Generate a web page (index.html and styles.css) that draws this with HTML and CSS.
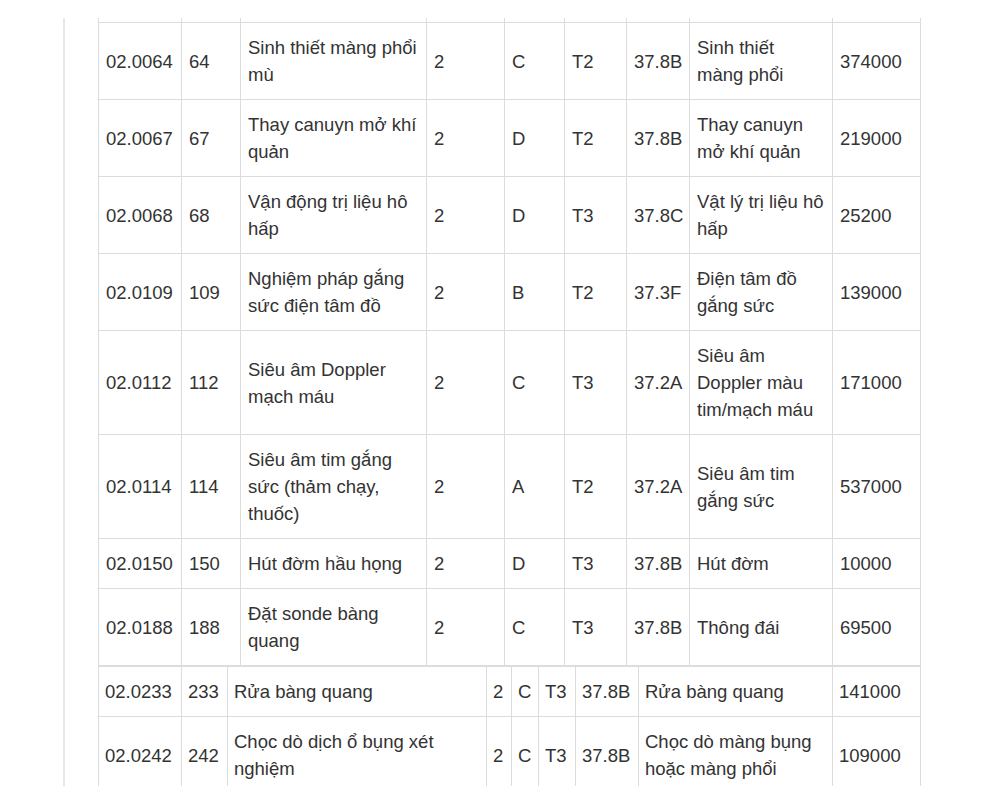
FILE: index.html
```html
<!DOCTYPE html>
<html lang="vi">
<head>
<meta charset="utf-8">
<title>Bảng giá dịch vụ kỹ thuật</title>
<link rel="stylesheet" href="styles.css">
</head>
<body>
<div class="page">
  <div class="frame">
    <table class="grid grid-a">
      <colgroup>
        <col class="a1"><col class="a2"><col class="a3"><col class="a4"><col class="a5"><col class="a6"><col class="a7"><col class="a8"><col class="a9">
      </colgroup>
      <tr class="cut"><td></td><td></td><td></td><td></td><td></td><td></td><td></td><td></td><td></td></tr>
      <tr><td>02.0064</td><td>64</td><td>Sinh thiết màng phổi mù</td><td>2</td><td>C</td><td>T2</td><td>37.8B</td><td>Sinh thiết màng phổi</td><td>374000</td></tr>
      <tr><td>02.0067</td><td>67</td><td>Thay canuyn mở khí quản</td><td>2</td><td>D</td><td>T2</td><td>37.8B</td><td>Thay canuyn mở khí quản</td><td>219000</td></tr>
      <tr><td>02.0068</td><td>68</td><td>Vận động trị liệu hô hấp</td><td>2</td><td>D</td><td>T3</td><td>37.8C</td><td>Vật lý trị liệu hô hấp</td><td>25200</td></tr>
      <tr><td>02.0109</td><td>109</td><td>Nghiệm pháp gắng sức điện tâm đồ</td><td>2</td><td>B</td><td>T2</td><td>37.3F</td><td>Điện tâm đồ gắng sức</td><td>139000</td></tr>
      <tr><td>02.0112</td><td>112</td><td>Siêu âm Doppler mạch máu</td><td>2</td><td>C</td><td>T3</td><td>37.2A</td><td>Siêu âm Doppler màu tim/mạch máu</td><td>171000</td></tr>
      <tr><td>02.0114</td><td>114</td><td>Siêu âm tim gắng sức (thảm chạy, thuốc)</td><td>2</td><td>A</td><td>T2</td><td>37.2A</td><td>Siêu âm tim gắng sức</td><td>537000</td></tr>
      <tr><td>02.0150</td><td>150</td><td>Hút đờm hầu họng</td><td>2</td><td>D</td><td>T3</td><td>37.8B</td><td>Hút đờm</td><td>10000</td></tr>
      <tr><td>02.0188</td><td>188</td><td>Đặt sonde bàng quang</td><td>2</td><td>C</td><td>T3</td><td>37.8B</td><td>Thông đái</td><td>69500</td></tr>
    </table>
    <table class="grid grid-b">
      <colgroup>
        <col class="b1"><col class="b2"><col class="b3"><col class="b4"><col class="b5"><col class="b6"><col class="b7"><col class="b8"><col class="b9">
      </colgroup>
      <tr><td>02.0233</td><td>233</td><td>Rửa bàng quang</td><td>2</td><td>C</td><td>T3</td><td>37.8B</td><td>Rửa bàng quang</td><td>141000</td></tr>
      <tr><td>02.0242</td><td>242</td><td>Chọc dò dịch ổ bụng xét nghiệm</td><td>2</td><td>C</td><td>T3</td><td>37.8B</td><td>Chọc dò màng bụng hoặc màng phổi</td><td>109000</td></tr>
    </table>
  </div>
</div>
</body>
</html>
```
FILE: styles.css
```css
html, body {
  margin: 0;
  padding: 0;
  background: #ffffff;
}

body {
  font-family: "Liberation Sans", Arial, sans-serif;
  font-size: 18.5px;
  color: #333333;
}

.page {
  padding-top: 18px;
  width: 1000px;
}

.frame {
  margin-left: 63px;
  border-left: 2px solid #e8e8e8;
  padding-left: 33px;
  height: 768px;
  overflow: hidden;
}

.grid {
  border-collapse: collapse;
  table-layout: fixed;
  width: 822px;
}

.grid td {
  border: 1px solid #dcdcdc;
  padding: 11px 7px;
  line-height: 27px;
  vertical-align: middle;
  text-align: left;
}

.grid .cut td {
  border-top: none;
  height: 4px;
  padding: 0;
  line-height: 0;
}

.grid-b td {
  padding-left: 6px;
  padding-right: 6px;
}

.a1 { width: 83px; }
.a2 { width: 59px; }
.a3 { width: 186px; }
.a4 { width: 78px; }
.a5 { width: 60px; }
.a6 { width: 62px; }
.a7 { width: 63px; }
.a8 { width: 143px; }
.a9 { width: 88px; }

.b1 { width: 83px; }
.b2 { width: 46px; }
.b3 { width: 259px; }
.b4 { width: 25px; }
.b5 { width: 27px; }
.b6 { width: 37px; }
.b7 { width: 63px; }
.b8 { width: 194px; }
.b9 { width: 88px; }
```
